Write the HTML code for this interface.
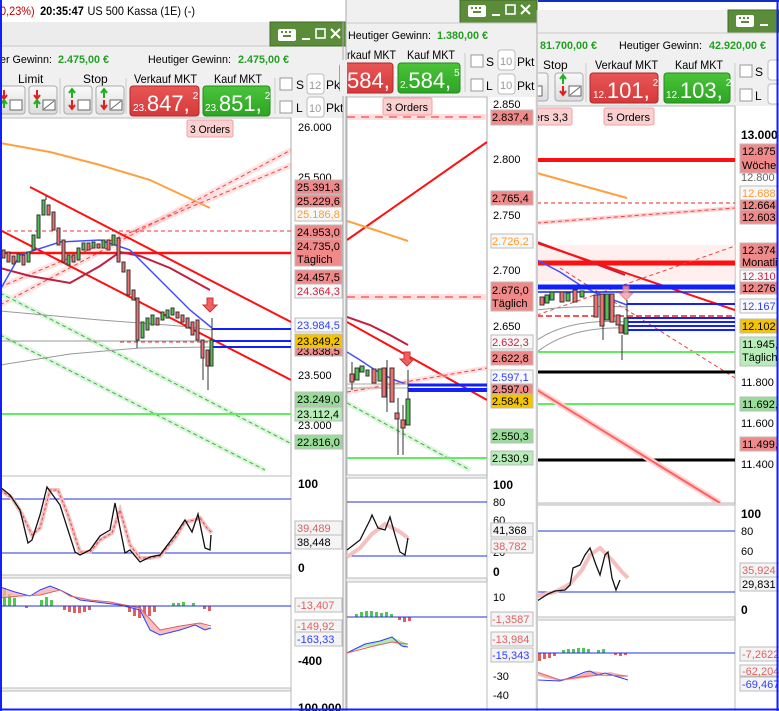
<!DOCTYPE html>
<html><head><meta charset="utf-8">
<style>
html,body{margin:0;padding:0;width:779px;height:711px;overflow:hidden;background:#f0f0f0}
svg{display:block;font-family:"Liberation Sans",Arial,sans-serif}
</style></head>
<body>
<svg width="779" height="711" viewBox="0 0 779 711" xmlns="http://www.w3.org/2000/svg" font-size="11">
<defs>
<linearGradient id="gr" x1="0" y1="0" x2="0" y2="1"><stop offset="0" stop-color="#e85656"/><stop offset="1" stop-color="#d63a3a"/></linearGradient>
<linearGradient id="gg" x1="0" y1="0" x2="0" y2="1"><stop offset="0" stop-color="#4ac43a"/><stop offset="1" stop-color="#2ea424"/></linearGradient>
<linearGradient id="gb" x1="0" y1="0" x2="0" y2="1"><stop offset="0" stop-color="#fafafa"/><stop offset="1" stop-color="#dcdcdc"/></linearGradient>
<clipPath id="c1"><rect x="0" y="118" width="291" height="358"/></clipPath>
<clipPath id="c2"><rect x="347" y="97" width="140" height="378"/></clipPath>
<clipPath id="c3"><rect x="537" y="106" width="198" height="397"/></clipPath>
<clipPath id="w3"><rect x="538" y="0" width="241" height="711"/></clipPath>
<clipPath id="ax3"><rect x="735" y="106" width="42" height="600"/></clipPath>
</defs>

<!-- top title bar -->
<rect x="0" y="0" width="779" height="22" fill="#fff"/>
<text x="0" y="15" font-size="12" textLength="195" lengthAdjust="spacingAndGlyphs"><tspan fill="#c00000">0,23%)</tspan><tspan dx="6" font-weight="bold" fill="#000">20:35:47</tspan><tspan dx="4" fill="#000">US 500 Kassa (1E) (-)</tspan></text>

<!-- ================= WINDOW 1 ================= -->
<rect x="0" y="22" width="346" height="689" fill="#f0f0f0"/>
<rect x="0" y="22" width="346" height="24" fill="#ececec"/>
<line x1="0" y1="46" x2="346" y2="46" stroke="#c8c8c8"/>
<rect x="270" y="22" width="77" height="24" fill="#5b8c3a" stroke="#3f6a25"/>
<rect x="278" y="29" width="18" height="12" rx="2" fill="#fff"/>
<g fill="#5b8c3a"><rect x="281" y="31" width="2" height="2"/><rect x="285" y="31" width="2" height="2"/><rect x="289" y="31" width="2" height="2"/><rect x="283" y="35" width="8" height="2"/></g>
<rect x="302" y="38" width="8" height="2" fill="#fff"/>
<rect x="316" y="29" width="9" height="9" fill="none" stroke="#fff" stroke-width="1.6"/>
<path d="M331 29l9 9M340 29l-9 9" stroke="#fff" stroke-width="2"/>
<text x="0" y="63" textLength="52" lengthAdjust="spacingAndGlyphs">er Gewinn:</text>
<text x="58" y="63" font-weight="bold" fill="#22a022" textLength="51" lengthAdjust="spacingAndGlyphs">2.475,00 €</text>
<text x="148" y="63" textLength="83" lengthAdjust="spacingAndGlyphs">Heutiger Gewinn:</text>
<text x="238" y="63" font-weight="bold" fill="#22a022" textLength="51" lengthAdjust="spacingAndGlyphs">2.475,00 €</text>
<text x="18" y="83" font-size="12">Limit</text>
<text x="83" y="83" font-size="12">Stop</text>
<text x="134" y="83" font-size="12" textLength="63" lengthAdjust="spacingAndGlyphs">Verkauf MKT</text>
<text x="214" y="83" font-size="12" textLength="48" lengthAdjust="spacingAndGlyphs">Kauf MKT</text>
<line x1="60" y1="78" x2="60" y2="114" stroke="#ccc"/>
<line x1="126" y1="78" x2="126" y2="114" stroke="#ccc"/>
<line x1="275" y1="78" x2="275" y2="114" stroke="#ccc"/>
<g stroke="#aaa" fill="url(#gb)">
<rect x="-4" y="86" width="29" height="28" rx="3"/><rect x="29" y="86" width="28" height="28" rx="3"/>
<rect x="64" y="86" width="28" height="28" rx="3"/><rect x="96" y="86" width="28" height="28" rx="3"/></g>
<g>
<path d="M4 90v8M1 95l3 4 3-4" stroke="#e02020" stroke-width="2" fill="none"/><path d="M4 108v-7M1 104l3-4 3 4" stroke="#20b020" stroke-width="2" fill="none"/><rect x="10" y="100" width="12" height="10" fill="#fff" stroke="#666"/>
<path d="M37 90v8M34 95l3 4 3-4" stroke="#e02020" stroke-width="2" fill="none"/><path d="M37 108v-7M34 104l3-4 3 4" stroke="#20b020" stroke-width="2" fill="none"/><path d="M43 100h12v10h-12z M44 109l10-8" stroke="#666" fill="#fff"/>
<path d="M72 98v-8M69 93l3-4 3 4" stroke="#20b020" stroke-width="2" fill="none"/><path d="M72 100v8M69 105l3 4 3-4" stroke="#e02020" stroke-width="2" fill="none"/><rect x="78" y="100" width="12" height="10" fill="#fff" stroke="#666"/>
<path d="M104 98v-8M101 93l3-4 3 4" stroke="#20b020" stroke-width="2" fill="none"/><path d="M104 100v8M101 105l3 4 3-4" stroke="#e02020" stroke-width="2" fill="none"/><path d="M110 100h12v10h-12z M111 109l10-8" stroke="#666" fill="#fff"/>
</g>
<rect x="130" y="86" width="69" height="30" rx="3" fill="url(#gr)" stroke="#b02828"/>
<text x="133" y="111" fill="#fff"><tspan font-size="10">23.</tspan><tspan font-size="22">847,</tspan><tspan font-size="10" dy="-12" dx="3">2</tspan></text>
<rect x="203" y="86" width="67" height="30" rx="3" fill="url(#gg)" stroke="#258a1c"/>
<text x="205" y="111" fill="#fff"><tspan font-size="10">23.</tspan><tspan font-size="22">851,</tspan><tspan font-size="10" dy="-12" dx="3">2</tspan></text>
<rect x="280" y="78" width="12" height="12" fill="#fff" stroke="#999"/><text x="296" y="89" font-size="12">S</text>
<rect x="307" y="74" width="17" height="20" rx="3" fill="#fff" stroke="#bbb"/><text x="309" y="89" fill="#999">12</text><text x="326" y="89" font-size="12">Pkt</text>
<rect x="280" y="101" width="12" height="12" fill="#fff" stroke="#999"/><text x="296" y="112" font-size="12">L</text>
<rect x="307" y="97" width="17" height="20" rx="3" fill="#fff" stroke="#bbb"/><text x="309" y="112" fill="#999">10</text><text x="326" y="112" font-size="12">Pkt</text>

<!-- chart area 1 -->
<rect x="0" y="118" width="291" height="358" fill="#fff" stroke="#bbb"/>
<rect x="291" y="118" width="52" height="593" fill="#fff"/>
<line x1="291" y1="118" x2="291" y2="711" stroke="#aaa"/>
<line x1="343" y1="22" x2="343" y2="711" stroke="#aaa"/>
<g clip-path="url(#c1)" fill="none">
<polyline points="0,143 50,152 100,165 150,180 210,208" stroke="#ffa040" stroke-width="2"/>
<line x1="0" y1="305" x2="291" y2="150" stroke="#ffb0b0" stroke-width="6" opacity=".35"/>
<line x1="0" y1="305" x2="291" y2="150" stroke="#f04040" stroke-dasharray="4,3"/>
<line x1="0" y1="287" x2="291" y2="165" stroke="#ffb0b0" stroke-width="6" opacity=".35"/>
<line x1="0" y1="287" x2="291" y2="165" stroke="#f04040" stroke-dasharray="4,3"/>
<line x1="0" y1="231" x2="291" y2="231" stroke="#f03030" stroke-dasharray="4,3"/>
<line x1="0" y1="253" x2="291" y2="253" stroke="#ff1010" stroke-width="2.5"/>
<line x1="0" y1="293" x2="290" y2="443" stroke="#dcf6dc" stroke-width="5"/>
<line x1="0" y1="293" x2="290" y2="443" stroke="#40b040" stroke-dasharray="4,3"/>
<line x1="0" y1="335" x2="265" y2="470" stroke="#dcf6dc" stroke-width="5"/>
<line x1="0" y1="335" x2="265" y2="470" stroke="#40b040" stroke-dasharray="4,3"/>
<line x1="0" y1="414" x2="291" y2="414" stroke="#60ee60" stroke-width="2"/>
<polyline points="0,311 100,320 180,326 212,330" stroke="#999"/>
<line x1="0" y1="341" x2="291" y2="341" stroke="#999"/>
<polyline points="0,365 70,354 140,348 212,347" stroke="#999"/>
<line x1="120" y1="342" x2="212" y2="342" stroke="#f03030" stroke-dasharray="4,3"/>
<line x1="30" y1="187" x2="291" y2="322" stroke="#ff1010" stroke-width="2"/>
<line x1="0" y1="230" x2="291" y2="380" stroke="#ff1010" stroke-width="2"/>
<polyline points="0,268 30,276 70,283 100,266 120,252 140,256 170,268 210,290" stroke="#c02040" stroke-width="2"/>
<polyline points="0,290 20,255 60,242 100,240 130,250 160,280 190,310 212,328" stroke="#4050ff" stroke-width="1.5"/>
<line x1="212" y1="329" x2="291" y2="329" stroke="#1020ff" stroke-width="2"/>
<line x1="212" y1="341" x2="291" y2="341" stroke="#1020ff" stroke-width="2"/>
<line x1="212" y1="347" x2="291" y2="347" stroke="#1020ff" stroke-width="2"/>
</g>
<g stroke="#333" stroke-width="1">
<g fill="#f07070">
<rect x="2" y="250" width="3" height="8"/><rect x="7" y="252" width="3" height="10"/><rect x="12" y="256" width="3" height="8"/>
<rect x="22" y="255" width="3" height="10"/><rect x="47" y="205" width="3" height="10"/><rect x="52" y="212" width="3" height="18"/><rect x="57" y="228" width="3" height="17"/><rect x="62" y="240" width="3" height="22"/>
<rect x="72" y="255" width="3" height="7"/><rect x="87" y="243" width="3" height="7"/><rect x="97" y="244" width="3" height="4"/><rect x="107" y="240" width="3" height="10"/>
<rect x="117" y="238" width="3" height="24"/><rect x="122" y="262" width="3" height="10"/><rect x="127" y="270" width="3" height="25"/><rect x="132" y="290" width="3" height="10"/><rect x="136" y="298" width="3" height="42"/>
<rect x="156" y="318" width="3" height="7"/><rect x="176" y="312" width="3" height="6"/><rect x="181" y="315" width="3" height="7"/><rect x="186" y="318" width="3" height="10"/><rect x="191" y="322" width="3" height="13"/><rect x="196" y="320" width="3" height="20"/><rect x="201" y="340" width="3" height="18"/><rect x="206" y="350" width="3" height="16"/>
</g>
<g fill="#50c050">
<rect x="17" y="254" width="3" height="8"/><rect x="27" y="252" width="3" height="10"/><rect x="32" y="235" width="3" height="15"/><rect x="37" y="215" width="3" height="23"/><rect x="42" y="200" width="3" height="15"/>
<rect x="67" y="255" width="3" height="10"/><rect x="77" y="248" width="3" height="12"/><rect x="82" y="243" width="3" height="7"/><rect x="92" y="242" width="3" height="6"/><rect x="102" y="240" width="3" height="8"/><rect x="112" y="235" width="3" height="10"/>
<rect x="141" y="322" width="3" height="16"/><rect x="146" y="318" width="3" height="12"/><rect x="151" y="315" width="3" height="10"/><rect x="161" y="312" width="3" height="8"/><rect x="166" y="310" width="3" height="8"/><rect x="171" y="308" width="3" height="7"/><rect x="210" y="340" width="3" height="26"/>
</g>
<line x1="46" y1="196" x2="46" y2="200"/><line x1="137" y1="340" x2="137" y2="348"/><line x1="203" y1="358" x2="203" y2="380"/><line x1="208" y1="366" x2="208" y2="390"/><line x1="212" y1="318" x2="212" y2="340"/>
</g>
<path d="M207 298h6v7h4l-7 7-7-7h4z" fill="#f06060" stroke="#d03030"/>
<rect x="187" y="120" width="46" height="17" rx="2" fill="#fbd0d0" stroke="#f0a0a0"/><text x="190" y="133" textLength="40" lengthAdjust="spacingAndGlyphs">3 Orders</text>
<!-- axis 1 -->
<g>
<text x="298" y="131">26.000</text><text x="298" y="181">25.500</text><text x="298" y="379">23.500</text><text x="298" y="429">23.000</text>
</g>
<g>
<rect x="295" y="180" width="47" height="14" fill="#f08a8a" stroke="#bbb"/><text x="297" y="191">25.391,3</text>
<rect x="295" y="195" width="47" height="12" fill="#f08a8a" stroke="#bbb"/><text x="297" y="205">25.229,6</text>
<rect x="295" y="207" width="47" height="14" fill="#f8f8f8" stroke="#bbb"/><text x="297" y="218" fill="#ff9a30">25.186,8</text>
<rect x="295" y="225" width="47" height="14" fill="#f08a8a" stroke="#bbb"/><text x="297" y="236">24.953,0</text>
<rect x="295" y="239" width="47" height="27" fill="#f08a8a" stroke="#bbb"/><text x="297" y="250">24.735,0</text><text x="297" y="263">Täglich</text>
<rect x="295" y="270" width="47" height="14" fill="#f08a8a" stroke="#bbb"/><text x="297" y="281">24.457,5</text>
<rect x="295" y="284" width="47" height="14" fill="#f8f8f8" stroke="#bbb"/><text x="297" y="295" fill="#d02040">24.364,3</text>
<rect x="295" y="318" width="47" height="14" fill="#f8f8f8" stroke="#bbb"/><text x="297" y="329" fill="#3040ff">23.984,5</text>
<rect x="295" y="344" width="47" height="12" fill="#f08a8a" stroke="#bbb"/><text x="297" y="355">23.838,5</text>
<rect x="295" y="334" width="47" height="14" fill="#f5c400" stroke="#bbb"/><text x="297" y="345">23.849,2</text>
<rect x="295" y="392" width="47" height="14" fill="#98dc98" stroke="#bbb"/><text x="297" y="403">23.249,0</text>
<rect x="295" y="407" width="47" height="14" fill="#b8ecb8" stroke="#bbb"/><text x="297" y="418">23.112,4</text>
<rect x="295" y="435" width="47" height="14" fill="#98dc98" stroke="#bbb"/><text x="297" y="446">22.816,0</text>
</g>
<!-- pane 1a -->
<rect x="0" y="476" width="291" height="99" fill="#fff" stroke="#bbb"/>
<line x1="0" y1="499" x2="291" y2="499" stroke="#2030e0"/><line x1="0" y1="553" x2="291" y2="553" stroke="#2030e0"/>
<polyline points="0,490 12,498 22,514 32,535 40,528 50,490 58,490 68,515 80,552 90,552 100,540 112,533 120,510 130,545 140,558 150,558 160,556 175,538 185,522 195,520 200,518 207,528 212,533" fill="none" stroke="#f4c0c0" stroke-width="4"/>
<polyline points="0,490 12,498 22,514 32,535 40,528 50,490 58,490 68,515 80,552 90,552 100,540 112,533 120,510 130,545 140,558 150,558 160,556 175,538 185,522 195,520 200,518 207,528 212,533" fill="none" stroke="#e05050" stroke-dasharray="3,2"/>
<polyline points="0,487 10,495 20,510 28,543 32,540 40,515 47,487 60,505 75,552 80,555 90,550 100,536 110,530 115,503 125,553 130,550 140,562 150,557 160,555 175,535 185,520 192,532 198,514 205,548 210,550 211,535" fill="none" stroke="#111" stroke-width="1.3"/>
<text x="298" y="488" font-size="12" font-weight="bold">100</text><text x="298" y="572" font-size="12" font-weight="bold">0</text>
<rect x="295" y="521" width="47" height="14" fill="#f4f4f4" stroke="#bbb"/><text x="297" y="532" fill="#e06060">39,489</text>
<rect x="295" y="535" width="47" height="14" fill="#f4f4f4" stroke="#bbb"/><text x="297" y="546">38,448</text>
<!-- pane 1b -->
<rect x="0" y="578" width="291" height="110" fill="#fff" stroke="#bbb"/>
<g fill="#50c850"><rect x="3" y="588" width="3" height="18"/><rect x="8" y="594" width="3" height="12"/><rect x="13" y="598" width="3" height="8"/><rect x="40" y="600" width="3" height="6"/><rect x="45" y="597" width="3" height="9"/><rect x="50" y="600" width="3" height="6"/><rect x="172" y="603" width="3" height="3"/><rect x="177" y="603" width="3" height="3"/><rect x="182" y="602" width="3" height="4"/><rect x="192" y="603" width="3" height="3"/></g>
<g fill="#e06060"><rect x="25" y="606" width="3" height="2"/><rect x="63" y="606" width="3" height="4"/><rect x="68" y="606" width="3" height="6"/><rect x="73" y="606" width="3" height="7"/><rect x="78" y="606" width="3" height="7"/><rect x="83" y="606" width="3" height="6"/><rect x="88" y="606" width="3" height="4"/><rect x="128" y="606" width="3" height="6"/><rect x="133" y="606" width="3" height="10"/><rect x="138" y="606" width="3" height="12"/><rect x="143" y="606" width="3" height="12"/><rect x="148" y="606" width="3" height="10"/><rect x="153" y="606" width="3" height="6"/><rect x="203" y="606" width="3" height="3"/><rect x="208" y="606" width="3" height="5"/></g>
<polygon points="0,587 15,592 30,596 40,590 50,586 60,590 80,600 120,605 140,610 150,630 160,635 180,630 195,625 205,630 211,628 200,623 180,626 160,630 140,608 110,602 90,600 70,596 60,590 40,595 20,596 0,598" fill="#f4b0b0" opacity=".8"/>
<polyline points="0,587 15,592 30,596 40,590 50,586 60,590 80,600 120,605 140,610 150,630 160,635 180,630 195,625 205,630 211,628" fill="none" stroke="#3040ff"/>
<polyline points="0,598 20,596 40,595 60,590 70,596 90,600 110,602 140,608 160,630 180,626 200,623 211,626" fill="none" stroke="#e06060"/>
<line x1="0" y1="606" x2="291" y2="606" stroke="#2030e0"/>
<rect x="295" y="598" width="47" height="14" fill="#f4f4f4" stroke="#bbb"/><text x="297" y="609" fill="#e06060">-13,407</text>
<rect x="295" y="620" width="47" height="12" fill="#f4f4f4" stroke="#bbb"/><text x="297" y="630" fill="#e06060">-149,92</text>
<rect x="295" y="632" width="47" height="14" fill="#f4f4f4" stroke="#bbb"/><text x="297" y="643" fill="#3040ff">-163,33</text>
<text x="298" y="665" font-size="12" font-weight="bold">-400</text>
<rect x="0" y="691" width="291" height="25" fill="#fff" stroke="#bbb"/>
<text x="298" y="712" font-size="12" font-weight="bold">100.000</text>

<!-- ================= WINDOW 2 ================= -->
<rect x="346" y="0" width="191" height="711" fill="#f0f0f0"/>
<line x1="346" y1="0" x2="346" y2="711" stroke="#aaa"/>
<rect x="460" y="0" width="77" height="23" fill="#5b8c3a" stroke="#3f6a25"/>
<rect x="468" y="5" width="18" height="12" rx="2" fill="#fff"/>
<g fill="#5b8c3a"><rect x="471" y="7" width="2" height="2"/><rect x="475" y="7" width="2" height="2"/><rect x="479" y="7" width="2" height="2"/><rect x="473" y="11" width="8" height="2"/></g>
<rect x="492" y="14" width="8" height="2" fill="#fff"/>
<rect x="506" y="5" width="9" height="9" fill="none" stroke="#fff" stroke-width="1.6"/>
<path d="M521 5l9 9M530 5l-9 9" stroke="#fff" stroke-width="2"/>
<line x1="346" y1="23" x2="537" y2="23" stroke="#c8c8c8"/>
<text x="348" y="39" textLength="83" lengthAdjust="spacingAndGlyphs">Heutiger Gewinn:</text>
<text x="437" y="39" font-weight="bold" fill="#22a022" textLength="51" lengthAdjust="spacingAndGlyphs">1.380,00 €</text>
<text x="347" y="59" font-size="12" textLength="49" lengthAdjust="spacingAndGlyphs">rkauf MKT</text>
<text x="407" y="59" font-size="12" textLength="48" lengthAdjust="spacingAndGlyphs">Kauf MKT</text>
<rect x="340" y="63" width="53" height="30" rx="3" fill="url(#gr)" stroke="#b02828"/>
<rect x="340" y="60" width="7" height="36" fill="#f0f0f0"/>
<text x="347" y="88" fill="#fff"><tspan font-size="22">584,</tspan><tspan font-size="10" dy="-12" dx="3">1</tspan></text>
<rect x="398" y="63" width="62" height="30" rx="3" fill="url(#gg)" stroke="#258a1c"/>
<text x="400" y="88" fill="#fff"><tspan font-size="10">2.</tspan><tspan font-size="22">584,</tspan><tspan font-size="10" dy="-12" dx="3">5</tspan></text>
<line x1="465" y1="53" x2="465" y2="92" stroke="#ccc"/>
<rect x="471" y="55" width="12" height="12" fill="#fff" stroke="#999"/><text x="486" y="66" font-size="12">S</text>
<rect x="498" y="50" width="17" height="20" rx="3" fill="#fff" stroke="#bbb"/><text x="500" y="65" fill="#999">10</text><text x="517" y="66" font-size="12">Pkt</text>
<rect x="471" y="79" width="12" height="12" fill="#fff" stroke="#999"/><text x="486" y="90" font-size="12">L</text>
<rect x="498" y="74" width="17" height="20" rx="3" fill="#fff" stroke="#bbb"/><text x="500" y="89" fill="#999">10</text><text x="517" y="90" font-size="12">Pkt</text>
<rect x="347" y="97" width="140" height="378" fill="#fff" stroke="#bbb"/>
<rect x="487" y="97" width="48" height="614" fill="#fff"/>
<line x1="487" y1="97" x2="487" y2="711" stroke="#aaa"/>
<g clip-path="url(#c2)" fill="none">
<line x1="347" y1="117" x2="487" y2="117" stroke="#ffc0c0" stroke-width="6" opacity=".5"/>
<line x1="347" y1="117" x2="487" y2="117" stroke="#f02020" stroke-dasharray="8,6"/>
<line x1="347" y1="240" x2="487" y2="142" stroke="#ff1010" stroke-width="2"/>
<polyline points="347,221 375,230 408,241" stroke="#ffa040" stroke-width="2"/>
<line x1="347" y1="297" x2="487" y2="297" stroke="#ffc0c0" stroke-width="6" opacity=".5"/>
<line x1="347" y1="297" x2="487" y2="297" stroke="#f02020" stroke-dasharray="8,6"/>
<polyline points="347,317 370,325 390,335 408,345" stroke="#c02040" stroke-width="2"/>
<line x1="347" y1="322" x2="487" y2="400" stroke="#ff1010" stroke-width="2"/>
<line x1="347" y1="392" x2="487" y2="368" stroke="#ffc0c0" stroke-width="5" opacity=".5"/>
<line x1="347" y1="392" x2="487" y2="368" stroke="#f04040" stroke-dasharray="4,3"/>
<polyline points="347,352 360,360 375,370 390,378 405,384" stroke="#4050ff" stroke-width="1.5"/>
<line x1="347" y1="384" x2="408" y2="384" stroke="#aaa"/><line x1="347" y1="388" x2="408" y2="388" stroke="#aaa"/>
<line x1="408" y1="385" x2="487" y2="385" stroke="#1020ff" stroke-width="3"/>
<line x1="408" y1="390" x2="487" y2="390" stroke="#1020ff" stroke-width="4"/>
<line x1="347" y1="403" x2="470" y2="470" stroke="#dcf6dc" stroke-width="5"/>
<line x1="347" y1="403" x2="470" y2="470" stroke="#40b040" stroke-dasharray="4,3"/>
<line x1="347" y1="458" x2="487" y2="458" stroke="#60ee60" stroke-width="2"/>
</g>
<g stroke="#333">
<line x1="352" y1="362" x2="352" y2="390"/><line x1="387" y1="360" x2="387" y2="412"/><line x1="398" y1="398" x2="398" y2="455"/><line x1="403" y1="405" x2="403" y2="455"/><line x1="408" y1="370" x2="408" y2="420"/>
<g fill="#f07070"><rect x="350" y="374" width="4" height="8"/><rect x="372" y="369" width="4" height="14"/><rect x="382" y="368" width="4" height="29"/><rect x="390" y="368" width="4" height="34"/><rect x="395" y="413" width="4" height="6"/><rect x="401" y="420" width="4" height="8"/></g>
<g fill="#50c050"><rect x="355" y="368" width="4" height="12"/><rect x="360" y="366" width="4" height="6"/><rect x="366" y="370" width="3" height="6"/><rect x="378" y="369" width="4" height="12"/><rect x="406" y="399" width="4" height="26"/></g>
</g>
<path d="M404 352h6v7h4l-7 7-7-7h4z" fill="#f06060" stroke="#d03030"/>
<rect x="383" y="98" width="49" height="17" rx="2" fill="#fbd0d0" stroke="#f0a0a0"/><text x="386" y="111" textLength="42" lengthAdjust="spacingAndGlyphs">3 Orders</text>
<g><text x="493" y="108">2.850</text><text x="493" y="163">2.800</text><text x="493" y="219">2.750</text><text x="493" y="274">2.700</text><text x="493" y="330">2.650</text></g>
<g>
<rect x="491" y="110" width="42" height="15" fill="#f08a8a" stroke="#bbb"/><text x="492" y="121">2.837,4</text>
<rect x="491" y="191" width="42" height="14" fill="#f08a8a" stroke="#bbb"/><text x="492" y="202">2.765,4</text>
<rect x="491" y="234" width="42" height="14" fill="#f8f8f8" stroke="#bbb"/><text x="492" y="245" fill="#ff9a30">2.726,2</text>
<rect x="491" y="282" width="42" height="29" fill="#f08a8a" stroke="#bbb"/><text x="492" y="294">2.676,0</text><text x="492" y="307">Täglich</text>
<rect x="491" y="335" width="42" height="14" fill="#f8f8f8" stroke="#bbb"/><text x="492" y="346" fill="#d02040">2.632,3</text>
<rect x="491" y="351" width="42" height="14" fill="#f08a8a" stroke="#bbb"/><text x="492" y="362">2.622,8</text>
<rect x="491" y="370" width="42" height="14" fill="#f8f8f8" stroke="#bbb"/><text x="492" y="381" fill="#3040ff">2.597,1</text>
<rect x="491" y="384" width="42" height="10" fill="#f08a8a" stroke="#bbb"/><text x="492" y="393">2.597,0</text>
<rect x="491" y="394" width="42" height="14" fill="#f5c400" stroke="#bbb"/><text x="492" y="405">2.584,3</text>
<rect x="491" y="429" width="42" height="14" fill="#98dc98" stroke="#bbb"/><text x="492" y="440">2.550,3</text>
<rect x="491" y="451" width="42" height="14" fill="#b8ecb8" stroke="#bbb"/><text x="492" y="462">2.530,9</text>
</g>
<rect x="347" y="478" width="140" height="100" fill="#fff" stroke="#bbb"/>
<line x1="347" y1="502" x2="487" y2="502" stroke="#2030e0"/><line x1="347" y1="556" x2="487" y2="556" stroke="#2030e0"/>
<polyline points="347,557 360,548 372,534 385,524 400,532 408,538" fill="none" stroke="#f4c0c0" stroke-width="4"/>
<polyline points="347,550 360,540 370,520 372,515 378,528 385,530 390,517 395,535 400,552 405,555 408,538" fill="none" stroke="#111" stroke-width="1.3"/>
<g><text x="493" y="489" font-size="12" font-weight="bold">100</text><text x="493" y="506">80</text><text x="493" y="524">60</text><text x="493" y="556">20</text><text x="493" y="576" font-size="12" font-weight="bold">0</text></g>
<rect x="491" y="523" width="42" height="14" fill="#f4f4f4" stroke="#bbb"/><text x="493" y="534">41,368</text>
<rect x="491" y="539" width="42" height="14" fill="#f4f4f4" stroke="#bbb"/><text x="493" y="550" fill="#e06060">38,782</text>
<rect x="347" y="582" width="140" height="135" fill="#fff" stroke="#bbb"/>
<g fill="#50c850"><rect x="355" y="614" width="3" height="3"/><rect x="360" y="612" width="3" height="5"/><rect x="365" y="611" width="3" height="6"/><rect x="370" y="611" width="3" height="6"/><rect x="375" y="612" width="3" height="5"/><rect x="380" y="613" width="3" height="4"/><rect x="385" y="612" width="3" height="5"/><rect x="390" y="614" width="3" height="3"/></g>
<g fill="#e06060"><rect x="398" y="617" width="3" height="3"/><rect x="403" y="617" width="3" height="5"/><rect x="408" y="617" width="3" height="4"/></g>
<line x1="347" y1="617" x2="487" y2="617" stroke="#2030e0"/>
<polygon points="347,652 365,644 380,641 392,637 408,644 405,648 392,642 380,645 365,647" fill="#b0eab0"/>
<polyline points="347,653 365,644 380,641 392,637 402,646 408,647" fill="none" stroke="#3040ff"/>
<polyline points="347,653 370,647 392,642 408,644" fill="none" stroke="#e06060"/>
<g><text x="493" y="601">10</text><text x="493" y="680">-30</text><text x="493" y="699">-40</text></g>
<rect x="491" y="612" width="42" height="14" fill="#f4f4f4" stroke="#bbb"/><text x="492" y="623" fill="#e06060">-1,3587</text>
<rect x="491" y="632" width="42" height="14" fill="#f4f4f4" stroke="#bbb"/><text x="492" y="643" fill="#e06060">-13,984</text>
<rect x="491" y="648" width="42" height="14" fill="#f4f4f4" stroke="#bbb"/><text x="492" y="659" fill="#3040ff">-15,343</text>

<!-- ================= WINDOW 3 ================= -->
<g clip-path="url(#w3)">
<rect x="537" y="10" width="242" height="701" fill="#f0f0f0"/>
<line x1="537" y1="1" x2="779" y2="1" stroke="#1030c0" stroke-width="2"/>
<rect x="537" y="2" width="242" height="8" fill="#fff"/>
<rect x="728" y="10" width="51" height="23" fill="#5b8c3a" stroke="#3f6a25"/>
<rect x="736" y="15" width="18" height="12" rx="2" fill="#fff"/>
<g fill="#5b8c3a"><rect x="739" y="17" width="2" height="2"/><rect x="743" y="17" width="2" height="2"/><rect x="747" y="17" width="2" height="2"/><rect x="741" y="21" width="8" height="2"/></g>
<rect x="760" y="24" width="8" height="2" fill="#fff"/>
<line x1="537" y1="33" x2="779" y2="33" stroke="#c8c8c8"/>
<text x="540" y="49" font-weight="bold" fill="#22a022" textLength="57" lengthAdjust="spacingAndGlyphs">81.700,00 €</text>
<text x="619" y="49" textLength="83" lengthAdjust="spacingAndGlyphs">Heutiger Gewinn:</text>
<text x="709" y="49" font-weight="bold" fill="#22a022" textLength="57" lengthAdjust="spacingAndGlyphs">42.920,00 €</text>
<text x="543" y="69" font-size="12">Stop</text>
<text x="595" y="69" font-size="12" textLength="63" lengthAdjust="spacingAndGlyphs">Verkauf MKT</text>
<text x="675" y="69" font-size="12" textLength="48" lengthAdjust="spacingAndGlyphs">Kauf MKT</text>
<line x1="586" y1="63" x2="586" y2="102" stroke="#ccc"/><line x1="735" y1="63" x2="735" y2="102" stroke="#ccc"/>
<rect x="520" y="73" width="28" height="28" rx="3" fill="url(#gb)" stroke="#aaa"/>
<path d="M530 86h12v10h-12z" stroke="#666" fill="#fff"/>
<rect x="555" y="73" width="28" height="28" rx="3" fill="url(#gb)" stroke="#aaa"/>
<path d="M563 84v-8M560 79l3-4 3 4" stroke="#20b020" stroke-width="2" fill="none"/><path d="M563 86v8M560 91l3 4 3-4" stroke="#e02020" stroke-width="2" fill="none"/><path d="M569 86h12v10h-12z M570 95l10-8" stroke="#666" fill="#fff"/>
<rect x="590" y="73" width="68" height="30" rx="3" fill="url(#gr)" stroke="#b02828"/>
<text x="593" y="98" fill="#fff"><tspan font-size="10">12.</tspan><tspan font-size="22">101,</tspan><tspan font-size="10" dy="-12" dx="3">2</tspan></text>
<rect x="664" y="73" width="66" height="30" rx="3" fill="url(#gg)" stroke="#258a1c"/>
<text x="666" y="98" fill="#fff"><tspan font-size="10">12.</tspan><tspan font-size="22">103,</tspan><tspan font-size="10" dy="-12" dx="3">2</tspan></text>
<rect x="740" y="65" width="12" height="12" fill="#fff" stroke="#999"/><text x="755" y="76" font-size="12">S</text>
<rect x="768" y="60" width="17" height="20" rx="3" fill="#fff" stroke="#bbb"/>
<rect x="740" y="89" width="12" height="12" fill="#fff" stroke="#999"/><text x="755" y="100" font-size="12">L</text>
<rect x="768" y="84" width="17" height="20" rx="3" fill="#fff" stroke="#bbb"/>
<rect x="537" y="106" width="198" height="397" fill="#fff" stroke="#bbb"/>
<rect x="735" y="106" width="42" height="605" fill="#fff"/>
<line x1="735" y1="106" x2="735" y2="711" stroke="#aaa"/>
<g clip-path="url(#c3)" fill="none">
<line x1="537" y1="160" x2="735" y2="160" stroke="#ff1010" stroke-width="4"/>
<polyline points="537,173 580,185 627,198" stroke="#ffa040" stroke-width="2"/>
<line x1="537" y1="203" x2="735" y2="203" stroke="#f02020" stroke-dasharray="4,3"/>
<line x1="537" y1="223" x2="735" y2="208" stroke="#ffd0d0" stroke-width="4"/>
<line x1="537" y1="223" x2="735" y2="208" stroke="#f04040" stroke-dasharray="4,3"/>
<rect x="537" y="245" width="198" height="36" fill="#ffe8e8" opacity=".7"/>
<line x1="537" y1="263" x2="735" y2="263" stroke="#ff1010" stroke-width="5"/>
<polyline points="537,242 580,258 625,275" stroke="#c02040" stroke-width="2"/>
<line x1="537" y1="243" x2="735" y2="310" stroke="#ff1010" stroke-width="2"/>
<line x1="537" y1="315" x2="735" y2="246" stroke="#f04040" stroke-dasharray="4,3"/>
<line x1="560" y1="268" x2="735" y2="378" stroke="#f04040" stroke-dasharray="4,3"/>
<polyline points="537,260 560,272 580,285 600,295 627,305" stroke="#4050ff" stroke-width="1.5"/>
<line x1="537" y1="287" x2="735" y2="287" stroke="#1020ff" stroke-width="5"/>
<line x1="537" y1="292" x2="735" y2="292" stroke="#1020ff" stroke-width="1.5"/>
<line x1="627" y1="304" x2="735" y2="304" stroke="#1020ff" stroke-width="2"/>
<line x1="537" y1="316" x2="735" y2="316" stroke="#f02020" stroke-dasharray="6,3" stroke-width="1.5"/>
<line x1="627" y1="318" x2="735" y2="318" stroke="#1020ff" stroke-width="2"/>
<line x1="627" y1="322" x2="735" y2="322" stroke="#1020ff" stroke-width="2"/>
<line x1="627" y1="326" x2="735" y2="326" stroke="#1020ff" stroke-width="2"/>
<line x1="627" y1="330" x2="735" y2="330" stroke="#1020ff" stroke-width="2"/>
<path d="M537 340Q570 318 627 322M537 352Q570 326 627 328M537 310Q580 305 627 307" stroke="#999"/>
<line x1="537" y1="352" x2="735" y2="352" stroke="#60ee60" stroke-width="2"/>
<line x1="537" y1="372" x2="735" y2="372" stroke="#000" stroke-width="3"/>
<line x1="537" y1="404" x2="735" y2="404" stroke="#60ee60" stroke-width="2"/>
<line x1="537" y1="460" x2="735" y2="460" stroke="#000" stroke-width="3"/>
<line x1="537" y1="390" x2="720" y2="503" stroke="#ffd0d0" stroke-width="6"/>
<line x1="537" y1="390" x2="720" y2="503" stroke="#ff6060" stroke-width="2"/>
</g>
<g stroke="#333">
<line x1="603" y1="315" x2="603" y2="340"/><line x1="622" y1="335" x2="622" y2="360"/><line x1="627" y1="300" x2="627" y2="330"/>
<g fill="#f07070"><rect x="540" y="297" width="4" height="8"/><rect x="560" y="292" width="4" height="10"/><rect x="573" y="290" width="4" height="12"/><rect x="594" y="295" width="4" height="22"/><rect x="600" y="294" width="4" height="32"/><rect x="610" y="294" width="4" height="28"/><rect x="616" y="315" width="4" height="10"/><rect x="619" y="325" width="4" height="8"/></g>
<g fill="#50c050"><rect x="545" y="295" width="4" height="8"/><rect x="550" y="292" width="4" height="8"/><rect x="566" y="293" width="4" height="8"/><rect x="580" y="291" width="4" height="6"/><rect x="605" y="294" width="4" height="26"/><rect x="624" y="318" width="4" height="16"/></g>
</g>
<path d="M623 286h6v7h4l-7 7-7-7h4z" fill="#f0a0a0" stroke="#e07070" opacity=".8"/>
<rect x="520" y="108" width="52" height="17" rx="2" fill="#fbd0d0" stroke="#f0a0a0"/><text x="524" y="121" textLength="44" lengthAdjust="spacingAndGlyphs">rders 3,3</text>
<rect x="604" y="108" width="50" height="17" rx="2" fill="#fbd0d0" stroke="#f0a0a0"/><text x="607" y="121" textLength="43" lengthAdjust="spacingAndGlyphs">5 Orders</text>
<g clip-path="url(#ax3)">
<text x="741" y="139" font-size="12" font-weight="bold">13.000</text>
<rect x="740" y="144" width="42" height="29" fill="#f08a8a" stroke="#bbb"/><text x="742" y="155">12.875,</text><text x="742" y="169">Wöchen</text>
<text x="741" y="181" fill="#666">12.800</text>
<rect x="740" y="186" width="42" height="14" fill="#f8f8f8" stroke="#bbb"/><text x="742" y="197" fill="#ff9a30">12.688,</text>
<rect x="740" y="200" width="42" height="10" fill="#f08a8a" stroke="#bbb"/><text x="742" y="209">12.664,</text>
<rect x="740" y="210" width="42" height="14" fill="#f08a8a" stroke="#bbb"/><text x="742" y="221">12.603,</text>
<rect x="740" y="243" width="42" height="25" fill="#f08a8a" stroke="#bbb"/><text x="742" y="254">12.374,</text><text x="742" y="266">Monatli</text>
<rect x="740" y="270" width="42" height="12" fill="#f8f8f8" stroke="#bbb"/><text x="742" y="280" fill="#d02040">12.310,</text>
<rect x="740" y="282" width="42" height="12" fill="#f08a8a" stroke="#bbb"/><text x="742" y="292">12.276,</text>
<rect x="740" y="299" width="42" height="14" fill="#f8f8f8" stroke="#bbb"/><text x="742" y="310" fill="#3040ff">12.167,</text>
<rect x="740" y="319" width="42" height="14" fill="#f5c400" stroke="#bbb"/><text x="742" y="330">12.102,</text>
<rect x="740" y="337" width="42" height="29" fill="#b8ecb8" stroke="#bbb"/><text x="742" y="348">11.945,</text><text x="742" y="361">Täglich</text>
<text x="741" y="386">11.800</text>
<rect x="740" y="397" width="42" height="14" fill="#98dc98" stroke="#bbb"/><text x="742" y="408">11.692,</text>
<text x="741" y="427">11.600</text>
<rect x="740" y="437" width="42" height="14" fill="#f08a8a" stroke="#bbb"/><text x="742" y="448">11.499,</text>
<text x="741" y="468">11.400</text>
</g>
<rect x="537" y="505" width="198" height="112" fill="#fff" stroke="#bbb"/>
<line x1="537" y1="531" x2="735" y2="531" stroke="#2030e0"/><line x1="537" y1="592" x2="735" y2="592" stroke="#2030e0"/>
<polyline points="537,596 555,592 570,584 582,570 590,555 600,548 612,560 622,572 628,578" fill="none" stroke="#f4c0c0" stroke-width="4"/>
<polyline points="537,601 548,594 555,591 565,590 570,585 573,568 580,565 585,555 590,548 596,565 600,575 605,555 608,552 612,578 616,590 620,580" fill="none" stroke="#111" stroke-width="1.3"/>
<g><text x="741" y="518" font-size="12" font-weight="bold">100</text><text x="741" y="535">80</text><text x="741" y="555">60</text><text x="741" y="614" font-size="12" font-weight="bold">0</text></g>
<rect x="740" y="563" width="40" height="14" fill="#f4f4f4" stroke="#bbb"/><text x="742" y="574" fill="#e06060">35,924</text>
<rect x="740" y="577" width="40" height="14" fill="#f4f4f4" stroke="#bbb"/><text x="742" y="588">29,831</text>
<rect x="537" y="620" width="198" height="95" fill="#fff" stroke="#bbb"/>
<g fill="#e06060"><rect x="538" y="653" width="3" height="8"/><rect x="543" y="653" width="3" height="6"/><rect x="548" y="653" width="3" height="5"/><rect x="553" y="653" width="3" height="3"/><rect x="614" y="653" width="3" height="2"/><rect x="619" y="653" width="3" height="3"/><rect x="624" y="653" width="3" height="2"/></g>
<g fill="#50c850"><rect x="562" y="650" width="3" height="3"/><rect x="567" y="649" width="3" height="4"/><rect x="572" y="649" width="3" height="4"/><rect x="577" y="648" width="3" height="5"/><rect x="582" y="648" width="3" height="5"/><rect x="587" y="649" width="3" height="4"/><rect x="597" y="650" width="3" height="3"/><rect x="602" y="649" width="3" height="4"/></g>
<line x1="537" y1="653" x2="735" y2="653" stroke="#2030e0"/>
<polygon points="537,672 560,680 580,675 590,671 600,672 610,675 620,678 628,676 610,672 585,678 560,681 545,678 537,675" fill="#f4b0b0"/>
<polyline points="537,680 560,681 575,676 585,672 590,671 598,675 605,673 615,676 628,680" fill="none" stroke="#3040ff"/>
<polyline points="537,672 560,680 580,677 600,675 628,676" fill="none" stroke="#e06060"/>
<rect x="740" y="647" width="40" height="14" fill="#f4f4f4" stroke="#bbb"/><text x="742" y="658" fill="#e06060">-7,2622</text>
<rect x="740" y="665" width="40" height="11" fill="#f4f4f4" stroke="#bbb"/><text x="742" y="675" fill="#e06060">-62,204</text>
<rect x="740" y="677" width="40" height="14" fill="#f4f4f4" stroke="#bbb"/><text x="742" y="688" fill="#3040ff">-69,467</text>
</g>
<line x1="537" y1="10" x2="537" y2="711" stroke="#aaa"/>

<!-- outer blue frame -->
<line x1="1" y1="0" x2="1" y2="711" stroke="#1020ff" stroke-width="2"/>
<line x1="777.5" y1="0" x2="777.5" y2="711" stroke="#1020ff" stroke-width="2"/>
<line x1="0" y1="709.5" x2="779" y2="709.5" stroke="#1020ff" stroke-width="2"/>
</svg>
</body></html>
